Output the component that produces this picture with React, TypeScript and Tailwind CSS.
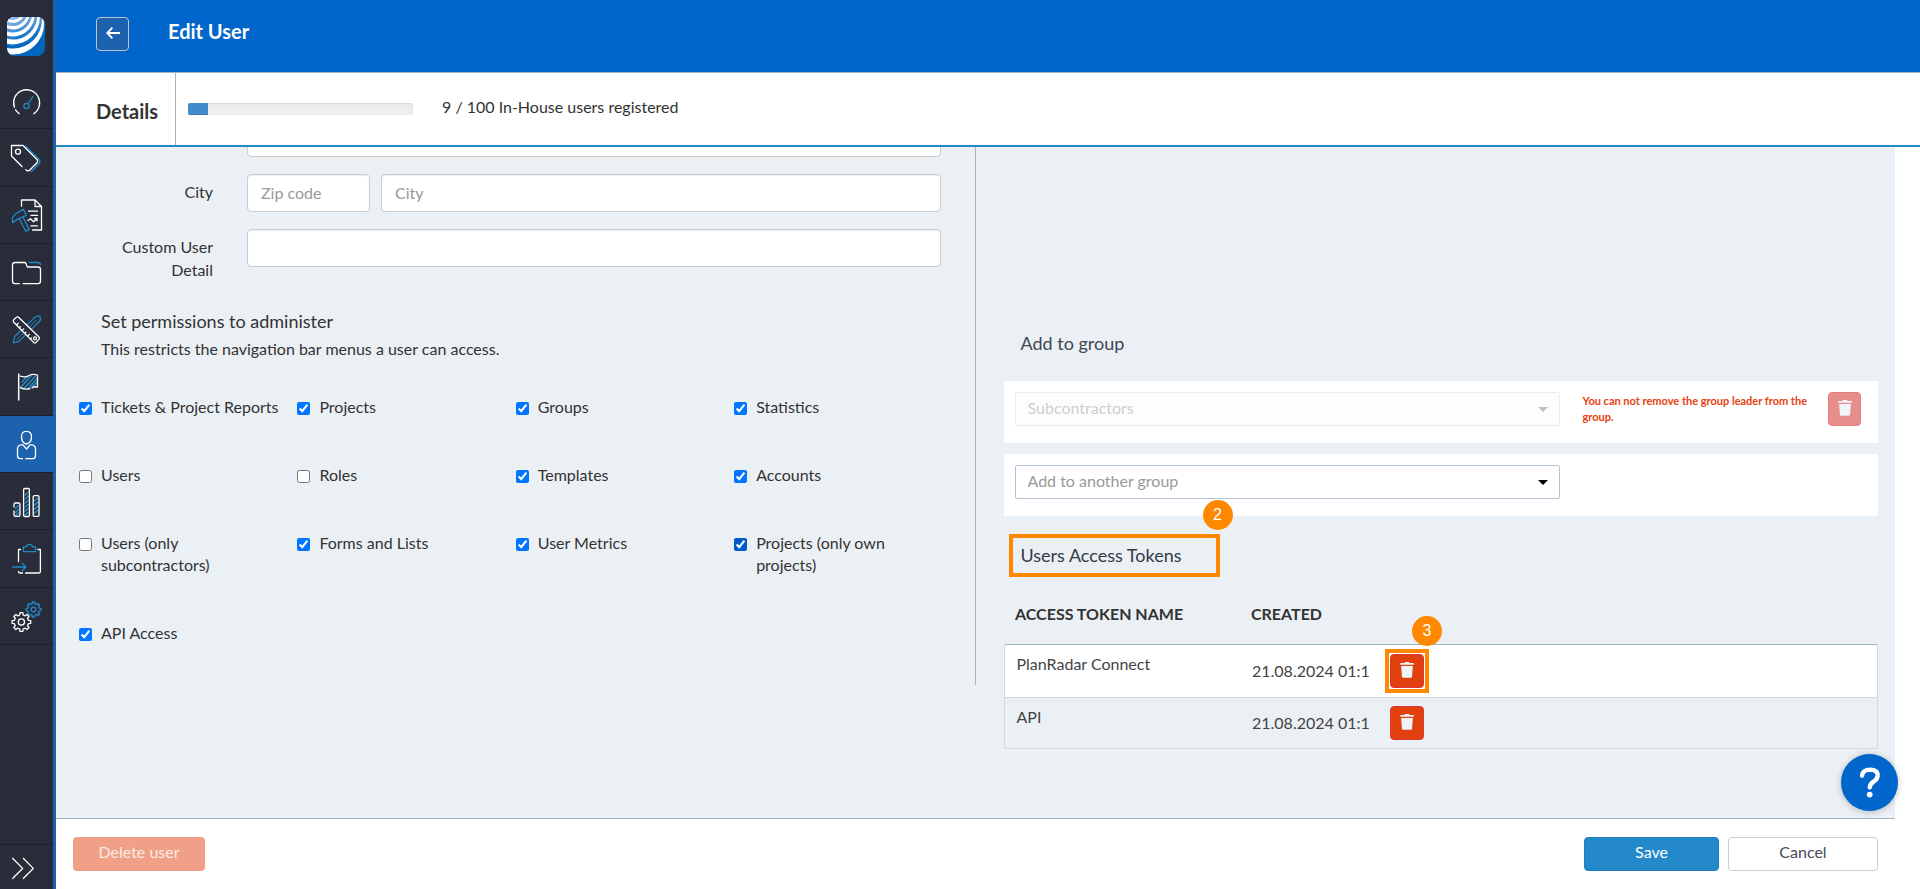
import type { ReactNode } from "react";
import { clsx } from "clsx";

const BLUE = "#2389c9";

function gearPath(cx: number, cy: number, outer: number, inner: number) {
  const teeth = 8;
  const step = (Math.PI * 2) / teeth;
  const points: string[] = [];
  for (let i = 0; i < teeth; i++) {
    const a = i * step;
    [
      [-0.3, inner],
      [-0.2, outer],
      [0.2, outer],
      [0.3, inner],
    ].forEach(([offset, r]) => {
      const t = a + offset * step;
      points.push(
        `${(cx + r * Math.cos(t)).toFixed(2)} ${(cy + r * Math.sin(t)).toFixed(2)}`
      );
    });
  }
  return `M${points.join("L")}Z`;
}

function NavIcon({ children }: { children: ReactNode }) {
  return (
    <svg
      viewBox="0 0 53 57"
      className="h-[57px] w-[53px]"
      fill="none"
      stroke="#fff"
      strokeWidth="1.3"
      strokeLinecap="round"
      strokeLinejoin="round"
      aria-hidden="true"
    >
      {children}
    </svg>
  );
}

const navItems: { label: string; active?: boolean; icon: ReactNode }[] = [
  {
    label: "Dashboard",
    icon: (
      <>
        <path d="M14.4 35.2A13 13 0 1 1 33.8 41.6" />
        <path d="M15.6 37.8A13 13 0 0 0 19.2 41.6" />
        <circle cx="26.5" cy="34" r="2.6" stroke={BLUE} />
        <path d="M28 31.8L33 24.5" stroke={BLUE} />
      </>
    ),
  },
  {
    label: "Tickets",
    icon: (
      <>
        <path d="M22 37.5L11.5 27V16.5H23L36.8 30.3Q38.5 32 36.8 34L29.8 41Q28 42.8 25.8 40.8" />
        <circle cx="18" cy="22.7" r="2.5" />
        <path d="M25.5 17L38.8 30Q41 32.5 38.8 35L31.3 42.8" stroke={BLUE} />
      </>
    ),
  },
  {
    label: "Reports",
    icon: (
      <>
        <path d="M21.5 19V13H35L41.5 19.5V43H32.5M35 13V19.5H41.5" />
        <path d="M28.5 24.2H37.5M31 28.4H37.5M31 38.8H37.5M28 33.5L30.5 31.8L33.5 34.8L37 31.5L36.9 33.8M37 31.5H34.6" />
        <path d="M12.5 35.8V30.4L16 26.6L23.4 22.3L26.4 28.4L18.6 31.6Z" stroke={BLUE} />
        <path d="M19.2 31.8L25.8 44.2L29.4 42.4L22.8 30" stroke={BLUE} />
      </>
    ),
  },
  {
    label: "Documents",
    icon: (
      <>
        <path d="M19.5 39.6H15Q12.5 39.6 12.5 37V21Q12.5 18.5 15 18.5H24.5Q25.5 18.5 26 19.5L27.3 23H38Q40.5 23 40.5 25.5V37Q40.5 39.6 38 39.6H23" />
        <path d="M29.5 18.5H38Q40.2 18.5 40.5 20.6" stroke={BLUE} />
      </>
    ),
  },
  {
    label: "Plans",
    icon: (
      <>
        <path d="M13.5 42L14.6 35.5L34.8 16.4Q38 13.8 40 15.8Q41.5 18 39.2 20.6L19 40.4Z" stroke={BLUE} />
        <path d="M36.5 19L17 38.5" stroke={BLUE} strokeWidth="1" />
        <path d="M13.8 18.7L16.2 16.4Q17.5 15.4 18.8 16.6L39 36Q40 37.2 39 38.4L36 41.4Q34.8 42.4 33.6 41.4L13.8 21.2Q12.6 20 13.8 18.7Z" fill="#282d39" />
        <path d="M16.5 24L18.2 22.3M19.3 26.8L20.4 25.7M22 29.6L23.7 27.9M24.8 32.4L25.9 31.3M27.6 35.2L29.3 33.5M30.4 38L31.5 36.9" />
        <circle cx="35" cy="37.4" r="1.5" />
      </>
    ),
  },
  {
    label: "Milestones",
    icon: (
      <>
        <path d="M22 24L27 18.5M21 29L31 18M24 30.5L35 18.5M28 30.5L37 20.5M32 29L37 24" stroke={BLUE} strokeWidth="1.6" />
        <path d="M18.7 16V42" strokeWidth="1.5" />
        <path d="M20.5 18.2Q25.5 20 29 17.5Q32.5 15.5 37.5 17V29H35.2M20.5 29.6Q24.5 32 30 30.6M32 29.8L35 28.4" />
      </>
    ),
  },
  {
    label: "Users",
    active: true,
    icon: (
      <>
        <path d="M26.5 15.3Q31.5 15.3 31.5 21T26.5 28Q21.5 27 21.5 21T26.5 15.3Z" />
        <path d="M22.5 42.6H20Q17.5 42.6 17.5 39.8V33Q17.5 29.2 21.3 28.8H23L26.5 33L30 28.8H31.7Q35.5 29.2 35.5 33V39.8Q35.5 42.6 33 42.6H25.8" />
      </>
    ),
  },
  {
    label: "Statistics",
    icon: (
      <>
        <path d="M15.5 35.5L18.5 32.5M15.5 39.5L18.5 36.5M16 42.5L18.5 40M25.3 22L28 19.3M25.3 26L28 23.3M25.3 30L28 27.3M25.3 34L28 31.3M25.3 38L28 35.3M25.3 42L28 39.3M34.7 28L37.5 25.3M34.7 32L37.5 29.3M34.7 36L37.5 33.3M34.7 40L37.5 37.3" stroke={BLUE} strokeWidth="1.6" />
        <path d="M14 34V31.5Q14 30 15.5 30H18.5Q20 30 20 31.5V42Q20 43.4 18.5 43.4H15.5Q14 43.4 14 42V38" />
        <rect x="23.6" y="15.5" width="5.8" height="28" rx="1.2" />
        <rect x="33.2" y="22.6" width="5.8" height="20.8" rx="1.2" />
      </>
    ),
  },
  {
    label: "Forms",
    icon: (
      <>
        <path d="M20.5 19.5H18.5V31.5M18.5 41.5Q18.5 43 20 43H22.5M25.5 43H39Q40.4 43 40.4 41.6V19.5H38" />
        <path d="M23.4 21.6V16.8H26.5Q26.8 14.3 29.5 14.3T32.5 16.8H35.6V21.6Z" stroke={BLUE} />
        <path d="M12.8 37H26M22.2 33.2L26 37L22.2 40.8" stroke={BLUE} />
      </>
    ),
  },
  {
    label: "Settings",
    icon: (
      <>
        <path d={gearPath(33.5, 21.5, 7.6, 5.8)} stroke={BLUE} />
        <circle cx="33.5" cy="21.5" r="2.4" stroke={BLUE} />
        <path d={gearPath(21.4, 34, 9.4, 7.2)} fill="#282d39" />
        <circle cx="21.4" cy="34" r="3.1" />
      </>
    ),
  },
];

function Logo() {
  return (
    <svg viewBox="0 0 38 39" className="h-[39px] w-[38px]" aria-hidden="true">
      <defs>
        <linearGradient id="logoBlue" gradientUnits="userSpaceOnUse" x1="12" y1="0" x2="22" y2="30">
          <stop offset="0" stopColor="#86b6e4" />
          <stop offset="0.7" stopColor="#0a6fc4" />
          <stop offset="1" stopColor="#0066bd" />
        </linearGradient>
        <clipPath id="logoClip">
          <rect width="38" height="39" rx="8" />
        </clipPath>
      </defs>
      <g clipPath="url(#logoClip)">
        <rect width="38" height="39" fill="url(#logoBlue)" />
        <circle cx="6" cy="6.6" r="31" fill="#fff" />
        <circle cx="6" cy="2.5" r="29" fill="url(#logoBlue)" />
        <circle cx="6" cy="0.6" r="26.8" fill="#fff" />
        <circle cx="6" cy="-1.6" r="24.2" fill="url(#logoBlue)" />
        <circle cx="6" cy="-2.2" r="21.6" fill="#fff" />
        <circle cx="6" cy="-3.8" r="19.2" fill="url(#logoBlue)" />
        <circle cx="6" cy="-4.2" r="16.6" fill="#fff" />
        <circle cx="6" cy="-5.4" r="14.4" fill="url(#logoBlue)" />
        <circle cx="6" cy="-5.8" r="11.6" fill="#fff" />
        <circle cx="6" cy="-6.6" r="9.6" fill="url(#logoBlue)" />
      </g>
    </svg>
  );
}

function Sidebar() {
  return (
    <nav className="flex w-14 shrink-0 flex-col border-r-3 border-[#1d62ae] bg-[#282d39]">
      <a href="#home" aria-label="Home" className="flex h-[72px] shrink-0 justify-center pt-[17px] pr-px">
        <Logo />
      </a>
      <div className="grid h-[573px] shrink-0 auto-rows-fr">
        {navItems.map((item) => (
          <a
            key={item.label}
            href={`#${item.label.toLowerCase()}`}
            aria-label={item.label}
            className={clsx(
              "block overflow-hidden border-b border-[#1c212b]",
              item.active && "bg-[#1d62ae]"
            )}
          >
            <NavIcon>{item.icon}</NavIcon>
          </a>
        ))}
      </div>
      <button
        type="button"
        aria-label="Expand menu"
        className="mt-auto h-[45px] shrink-0 border-t border-[#1c212b]"
      >
        <svg viewBox="0 0 53 44" className="h-11 w-[53px]" fill="none" stroke="#fff" strokeWidth="1.3">
          <path d="M12.3 13L22.6 23.4L12.3 33.8M23 13L33.3 23.4L23 33.8" />
        </svg>
      </button>
    </nav>
  );
}

const inputClass =
  "h-[38px] rounded border border-[#ccc] bg-white px-[13px] pb-0.5 text-base text-[#555] placeholder-[#999] shadow-[inset_0_1px_1px_rgba(0,0,0,0.075)] outline-none";

const permissions = [
  { label: "Tickets & Project Reports", checked: true },
  { label: "Projects", checked: true },
  { label: "Groups", checked: true },
  { label: "Statistics", checked: true },
  { label: "Users", checked: false },
  { label: "Roles", checked: false },
  { label: "Templates", checked: true },
  { label: "Accounts", checked: true },
  { label: "Users (only subcontractors)", checked: false },
  { label: "Forms and Lists", checked: true },
  { label: "User Metrics", checked: true },
  { label: "Projects (only own projects)", checked: true, focused: true },
  { label: "API Access", checked: true },
];

function DetailsForm() {
  return (
    <section className="self-start border-r border-[#a3b5c2] pb-[41px]">
      {/* the panel is scrolled, so the street field is cut off by the tab bar */}
      <div className="-mt-7 flex flex-col gap-[17px] pr-[34px]">
        <div className="flex gap-[34px]">
          <span className="w-[157px] shrink-0" />
          <input aria-label="Street" className={clsx(inputClass, "min-w-0 flex-1")} />
        </div>
        <div className="flex gap-[34px]">
          <label htmlFor="city" className="w-[157px] shrink-0 pt-1.5 text-right leading-[23px]">
            City
          </label>
          <div className="flex min-w-0 flex-1 gap-[11px]">
            <input aria-label="Zip code" placeholder="Zip code" className={clsx(inputClass, "w-[123px]")} />
            <input id="city" placeholder="City" className={clsx(inputClass, "min-w-0 flex-1")} />
          </div>
        </div>
        <div className="flex gap-[34px]">
          <label htmlFor="custom" className="w-[157px] shrink-0 pt-1.5 pl-10 text-right leading-[23px]">
            Custom User Detail
          </label>
          <input id="custom" className={clsx(inputClass, "min-w-0 flex-1")} />
        </div>
      </div>

      <div className="mt-[29px] mr-[34px] ml-[45px] border-t border-[#eee]">
        <h3 className="text-lg leading-5">Set permissions to administer</h3>
        <p className="mt-[7px] leading-[22px]">
          This restricts the navigation bar menus a user can access.
        </p>
      </div>

      <div className="mt-9 mr-[22px] ml-[23px] grid grid-cols-4 gap-y-[46px]">
        {permissions.map((p) => (
          <label key={p.label} className="flex items-start gap-[9px] pr-4 leading-[22px]">
            <input
              type="checkbox"
              defaultChecked={p.checked}
              className={clsx("mt-1.5 size-[13px] shrink-0", p.focused && "accent-[#005cc8]")}
            />
            {p.label}
          </label>
        ))}
      </div>
    </section>
  );
}

function TrashIcon() {
  return (
    <svg viewBox="0 0 14 16" className="-mt-0.5 h-4 w-3.5" fill="currentColor" aria-hidden="true">
      <path d="M4.6 0.6Q4.6 0 5.2 0H8.8Q9.4 0 9.4 0.6V0.9H13.2Q13.8 0.9 13.8 1.5V2.7H0.2V1.5Q0.2 0.9 0.8 0.9H4.6Z" />
      <path d="M1.2 4H12.8L12.1 14.4Q12 15.8 10.6 15.8H3.4Q2 15.8 1.9 14.4Z" />
    </svg>
  );
}

function GroupSelect({ label, disabled }: { label: string; disabled?: boolean }) {
  return (
    <div className={clsx("relative w-[545px] shrink-0", disabled && "opacity-30")}>
      <select
        aria-label={label}
        disabled={disabled}
        className={clsx(
          "h-[34px] w-full appearance-none rounded-xs border border-[#b4c4d4] px-3 pb-0.5 text-base opacity-100 outline-none",
          disabled ? "bg-[#f9f9f9] text-[#555b66]" : "bg-white text-[#999]"
        )}
      >
        <option>{label}</option>
      </select>
      <svg viewBox="0 0 10 5" className="pointer-events-none absolute top-[15px] right-3 h-[5px] w-2.5">
        <path d="M0 0H10L5 5Z" fill={disabled ? "#333" : "#000"} />
      </svg>
    </div>
  );
}

function StepBadge({ n, className }: { n: number; className: string }) {
  return (
    <span
      className={clsx(
        "absolute z-10 flex size-[30px] items-center justify-center rounded-full bg-[#ff8800] font-['Liberation_Sans',sans-serif] text-base text-white",
        className
      )}
    >
      {n}
    </span>
  );
}

const tokens = [
  { name: "PlanRadar Connect", created: "21.08.2024 01:1" },
  { name: "API", created: "21.08.2024 01:1" },
];

function GroupsAndTokens() {
  return (
    <section className="pr-[17px] pl-7">
      <div className="mt-[185px] mr-[17px] ml-[17px] border-t border-[#eee]">
        <h3 className="text-lg leading-5 text-[#3f4654]">Add to group</h3>
      </div>

      <div className="mt-7 flex h-[62px] items-start bg-white pt-[11px] pr-[17px] pl-[11px]">
        <GroupSelect label="Subcontractors" disabled />
        <p className="ml-[23px] w-[232px] pt-px text-[11px] leading-4 font-bold text-[#e8400f]">
          You can not remove the group leader from the group.
        </p>
        <button
          type="button"
          disabled
          aria-label="Remove group"
          className="ml-auto flex h-[34px] w-[33px] shrink-0 items-center justify-center rounded border border-[#e27d7a] bg-[#e78e8c] text-[#f1f5f9]"
        >
          <TrashIcon />
        </button>
      </div>
      <div className="mt-[11px] flex h-[62px] items-start bg-white pt-[11px] pl-[11px]">
        <GroupSelect label="Add to another group" />
      </div>

      <div className="mt-7 mr-[17px] ml-[17px] border-t border-[#eee]">
        <div className="relative w-fit">
          <h3 className="text-lg leading-5 text-[#333a45]">Users Access Tokens</h3>
          <div className="pointer-events-none absolute -top-[11px] -left-3 h-[43px] w-[211px] border-4 border-[#ff8800]" />
          <StepBadge n={2} className="-top-[45px] left-[182px]" />
        </div>
      </div>

      <table className="mt-[31px] w-full table-fixed border-collapse text-left">
        <thead>
          <tr className="h-12">
            <th className="w-[235px] pb-3 pl-[11px] font-bold">ACCESS TOKEN NAME</th>
            <th className="w-[140px] pb-3 pl-3 font-bold">CREATED</th>
            <th aria-label="Actions" />
          </tr>
        </thead>
        <tbody className="border border-[#cddbe7] border-t-[#9db3c0] text-[#444]">
          {tokens.map((token, i) => (
            <tr key={token.name} className="h-[51px] border-b border-[#cddbe7] first:h-[53px] odd:bg-white">
              <td className="pt-[7px] pl-3 align-top leading-6">{token.name}</td>
              <td className="pl-[13px] whitespace-nowrap">{token.created}</td>
              <td className="pt-px pl-[11px]">
                <div className="relative size-[34px]">
                  <button
                    type="button"
                    aria-label={`Delete ${token.name}`}
                    className="flex size-[34px] items-center justify-center rounded border border-[#d9363a] bg-[#e2400f] text-[#eef3f7]"
                  >
                    <TrashIcon />
                  </button>
                  {i === 0 && (
                    <>
                      <div className="pointer-events-none absolute -top-[5px] -left-[5px] size-11 border-4 border-[#ff8800]" />
                      <StepBadge n={3} className="-top-[38px] left-[22px]" />
                    </>
                  )}
                </div>
              </td>
            </tr>
          ))}
        </tbody>
      </table>
    </section>
  );
}

export default function App() {
  return (
    <div className="relative flex h-screen overflow-hidden bg-white font-[Lato,sans-serif] text-base text-[#333]">
      <Sidebar />
      <div className="flex min-w-0 flex-1 flex-col">
        <header className="flex h-[72px] shrink-0 items-start bg-[#0066cc] pl-10">
          <button
            type="button"
            aria-label="Back"
            className="mt-[17px] flex h-[34px] w-[33px] items-center justify-center rounded border border-[#b9c4cf] bg-[#1d62ae]"
          >
            <svg viewBox="0 0 14 12" className="-mt-0.5 h-3 w-3.5" fill="none" stroke="#fff" strokeWidth="1.8">
              <path d="M14 6H1.2M6.4 0.7L1.2 6L6.4 11.3" />
            </svg>
          </button>
          <h1 className="mt-[19px] ml-[39px] text-xl leading-6 font-bold text-white">Edit User</h1>
        </header>

        <div className="flex h-[75px] shrink-0 items-stretch border-t border-b-2 border-t-[#a3b5c2] border-b-[#2389c9]">
          <h2 className="flex w-[120px] items-center border-r border-[#a3b5c2] pt-1 pl-10 text-xl font-bold">
            Details
          </h2>
          <div className="mt-[30px] ml-3 h-3 w-[225px] overflow-hidden rounded-xs bg-[#ebedef] shadow-[inset_0_1px_2px_rgba(0,0,0,0.1)]">
            <div className="h-full w-[9%] bg-[#428bca] shadow-[inset_0_-1px_0_rgba(0,0,0,0.15)]" />
          </div>
          <p className="mt-[23px] ml-[29px] leading-[22px]">9 / 100 In-House users registered</p>
        </div>

        <main className="mr-[25px] grid min-h-0 flex-1 grid-cols-2 overflow-hidden bg-[#ebf0f5]">
          <DetailsForm />
          <GroupsAndTokens />
        </main>

        <footer className="mr-[25px] flex h-[71px] shrink-0 items-start border-t border-[#a3b5c2] pt-[18px] pr-[17px] pl-[17px]">
          <button type="button" className="h-[34px] w-[132px] rounded bg-[#f1a088] pb-1 text-[#fbeae5]">
            Delete user
          </button>
          <button type="button" className="ml-auto h-[34px] w-[135px] rounded border border-[#1f7fbd] bg-[#2389cb] pb-1 text-white">
            Save
          </button>
          <button type="button" className="ml-[9px] h-[34px] w-[150px] rounded border border-[#ccc] bg-white pb-1 text-[#434a5a]">
            Cancel
          </button>
        </footer>
      </div>

      <button
        type="button"
        aria-label="Help"
        className="absolute right-[22px] bottom-[78px] flex size-[57px] items-center justify-center rounded-full bg-[#0066cc] shadow-[0_1px_6px_rgba(0,0,0,0.25)]"
      >
        <svg viewBox="0 0 22 31" className="h-[31px] w-[22px]" fill="none" stroke="#fff" strokeWidth="4.4" strokeLinecap="round">
          <path d="M3 8.6Q4 2.6 11 2.6Q19 2.8 18.6 9Q18.3 12.4 14.6 14.6Q11 17 10.7 20.4" />
          <circle cx="10.7" cy="27.6" r="2.9" fill="#fff" stroke="none" />
        </svg>
      </button>
    </div>
  );
}
